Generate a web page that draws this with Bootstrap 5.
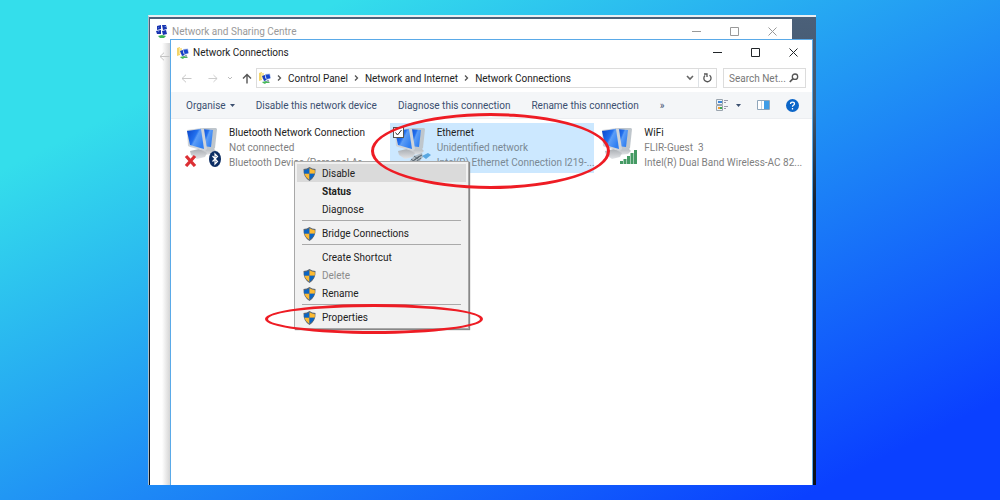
<!DOCTYPE html>
<html lang="en">
<head>
<meta charset="utf-8">
<meta name="viewport" content="width=device-width, initial-scale=1">
<title>Network Connections</title>
<link href="https://cdn.jsdelivr.net/npm/bootstrap@5.3.0/dist/css/bootstrap.min.css" rel="stylesheet">
<style>
  body {
    font: 10px/15px Roboto, "Open Sans", sans-serif;
    color: #222;
    min-height: 100vh;
    padding: 15px 184px 15px 148px;
    background: linear-gradient(to bottom right, #34deeb 17%, #0a40ff 90%) no-repeat fixed;
  }
  button, input { font: inherit; color: inherit; background: none; border: 0; padding: 0; }
  svg { display: block; flex: none; }
  .desktop {
    display: grid;
    min-height: calc(100vh - 30px);
    border-top: 2px solid #e9eef2;
    border-left: 1px solid #a9bccb;
    background: linear-gradient(#4b6079, #41566d 20%, #16202f 40%, #0b111c);
  }
  .desktop > section { grid-area: 1 / 1; background: #fff; }
  .win-back { margin: 2px 24px 0 1px; color: #999; }
  .desktop > .win-back { background: linear-gradient(90deg, #fff 12px, #d5d5d5 20px); }
  .win-back header { height: 24px; background: #fff; padding-left: 6px; }
  .back-side { width: 20px; padding: 9px 0 0 9px; }
  .win-front { margin: 22px 3px 0 21px; border: 1px solid #5aaae8; border-bottom: 0; }
  .title-row { height: 25px; padding: 0 14px 0 6px; }
  .captions { gap: 29px; }
  .win-back .captions { padding-right: 15px; }
  .address-row { height: 20px; margin: 3px 6px 0 10px; }
  .box { border: 1px solid #dcdcdc; height: 20px; }
  .crumb { gap: 6px; padding-left: 2px; }
  .crumb a { color: #222; text-decoration: none; }
  .search { width: 83px; margin-left: 6px; padding: 0 6px 0 5px; }
  .search input { width: 60px; outline: 0; }
  .search input::placeholder { color: #777; opacity: 1; }
  .commands { height: 27px; margin-top: 4px; padding: 0 13px 0 15px; background: #f4f6f8; border-bottom: 1px solid #eceef1; color: #3b5070; }
  .command-list { gap: 21px; }
  .tiles { display: grid; grid-template-columns: repeat(3, minmax(0, 1fr)); gap: 3px; padding: 4px 10px 0 11px; }
  .tile { height: 50px; padding: 2px 0 0 2px; gap: 5px; color: #7f7f7f; }
  .tile.selected { background: #cce8ff; color: #7a8894; }
  .tile strong { font-weight: 400; color: #222; }
  .tile-check { position: absolute; left: 3px; top: 4px; width: 11px; height: 11px; margin: 0; appearance: none; background: #fff; border: 1px solid #555; }
  .tile-tick { position: absolute; left: 3px; top: 4px; pointer-events: none; }
  .context {
    left: 123px; top: 121px; width: 175px; min-width: 0; padding: 2px; margin: 0;
    font-size: inherit; background: #f1f1f1; border: 1px solid #a8a8a8; border-radius: 0;
    box-shadow: 1px 1px 1px #888;
  }
  .context button { display: flex; align-items: center; width: 100%; height: 18px; padding: 1px 0 0 6px; gap: 6px; color: #222; line-height: 17px; }
  .context button.plain { padding-left: 25px; }
  .context button.lit { background: #dadada; }
  .context button:disabled { color: #8c8c8c; }
  .context hr { height: 1px; margin: 2px 5px 3px 5px; border: 0; background: #aaa; opacity: 1; }
  .ring { border: 3px solid #ee1c24; border-radius: 50%; pointer-events: none; z-index: 1100; }
  .ring-ethernet { left: 200px; top: 73px; width: 239px; height: 76px; }
  .ring-properties { left: 94px; top: 264px; width: 218px; height: 30px; }
</style>
</head>
<body>

<svg width="0" height="0" class="position-absolute" aria-hidden="true">
  <defs>
    <linearGradient id="screen" x1="0" y1="0" x2="1" y2=".6">
      <stop offset="0" stop-color="#0a44c8"/><stop offset=".5" stop-color="#2270ee"/><stop offset=".6" stop-color="#5c9df6"/><stop offset="1" stop-color="#2f7ff2"/>
    </linearGradient>
    <linearGradient id="base" x1="0" y1="0" x2="0" y2="1">
      <stop offset="0" stop-color="#a9adb2"/><stop offset="1" stop-color="#e3e5e8"/>
    </linearGradient>
    <symbol id="pcs" viewBox="0 0 40 42">
      <path d="M18 23l10-1 4 4-3 3-9 1-4-4z" fill="url(#base)"/>
      <path d="M6 26l9-2 8 4-2 4-8 2-6-4z" fill="url(#base)"/>
      <path d="M16 3l16 0 1 1-2 19-3 3-10-2z" fill="#bfc6cc"/>
      <path d="M17 4l12 1-2 17-9-1z" fill="url(#screen)"/>
      <path d="M3 5l15-2 2 1 3 20-2 2-15-4-2-1z" fill="#cfd4d9"/>
      <path d="M3 6l14-2 3 20-14-4z" fill="url(#screen)"/>
    </symbol>
    <symbol id="shield" viewBox="0 0 13 14">
      <path d="M6.500 0Q9 2 12.500 2Q13 10 6.500 14Q0 10 .5 2Q4 2 6.500 0z" fill="#5d6670"/>
      <path d="M6.500 1.200V6.800H1.300Q.9 5 1.300 3Q4 3 6.500 1.200z" fill="#0b65c4"/>
      <path d="M6.500 1.200V6.800H11.700Q12.100 5 11.700 3Q9 3 6.500 1.200z" fill="#fcba32"/>
      <path d="M6.500 6.800V13Q2.500 10.500 1.300 6.800z" fill="#fcba32"/>
      <path d="M6.500 6.800V13Q10.500 10.500 11.700 6.800z" fill="#0b65c4"/>
    </symbol>
    <symbol id="netfolder" viewBox="0 0 12 12">
      <path d="M0 1l3-1v8l-3 1z" fill="#f3d469"/><path d="M2 1h3v6H2z" fill="#fae79c"/>
      <path d="M3 4l3-1 2 5-3 1z" fill="#173fc4"/><path d="M6 2l5-.5L12 6l-4 2-2-2z" fill="#bfcce8"/><path d="M6.500 2.800l4-.5.8 4-3.600.8z" fill="#1747cf"/>
      <path d="M3 10l4-1 4 1-1 1H7l-1 1-2-1z" fill="#49b85c"/><path d="M8 8h2v2H8z" fill="#9dabb3"/>
    </symbol>
    <symbol id="chev" viewBox="0 0 5 8"><path d="M1 1.500l2.500 2.500L1 6.500" fill="none" stroke="#555" stroke-width="1.300"/></symbol>
    <symbol id="arrow" viewBox="0 0 11 9"><path d="M10.500 4.500H1M5 .7L1 4.500l4 3.800" fill="none" stroke="currentColor" stroke-width="1"/></symbol>
    <symbol id="min" viewBox="0 0 9 9"><path d="M0 4.500h9" stroke="currentColor"/></symbol>
    <symbol id="max" viewBox="0 0 9 9"><path d="M.5.5h8v8h-8z" fill="none" stroke="currentColor"/></symbol>
    <symbol id="close" viewBox="0 0 9 9"><path d="M.5.5l8 8m0-8l-8 8" stroke="currentColor"/></symbol>
  </defs>
</svg>

<main class="desktop">
  <section class="win-back" aria-label="Network and Sharing Centre">
    <header class="d-flex align-items-center">
      <svg class="me-1" width="12" height="13" viewBox="0 0 12 13"><path d="M1 1l4-1v4l-4 1zM6 0l4 0 1 4-4 1zM0 6l5-1v4H1zM6 6l4-1 1 4-4 1z" fill="#1a35b0"/><path d="M2 2h1v1M8 1h2v1M2 6h1v1" fill="#7fb0f4"/><path d="M2 11l4-1 4 1-2 2H4z" fill="#3db455"/></svg>
      <span class="flex-grow-1">Network and Sharing Centre</span>
      <span class="d-flex captions">
        <button aria-label="Minimise"><svg width="9" height="9"><use href="#min"/></svg></button>
        <button aria-label="Maximise"><svg width="9" height="9"><use href="#max"/></svg></button>
        <button aria-label="Close"><svg width="9" height="9"><use href="#close"/></svg></button>
      </span>
    </header>
    <div class="back-side"><svg width="11" height="9" color="#c4c4c4"><use href="#arrow"/></svg></div>
  </section>

  <section class="win-front position-relative" aria-label="Network Connections">
    <header class="title-row d-flex align-items-center">
      <svg class="me-1" width="12" height="12"><use href="#netfolder"/></svg>
      <span class="flex-grow-1">Network Connections</span>
      <span class="d-flex captions text-dark">
        <button aria-label="Minimise"><svg width="9" height="9"><use href="#min"/></svg></button>
        <button aria-label="Maximise"><svg width="9" height="9"><use href="#max"/></svg></button>
        <button aria-label="Close"><svg width="9" height="9"><use href="#close"/></svg></button>
      </span>
    </header>

    <div class="address-row d-flex align-items-center">
      <button aria-label="Back"><svg width="11" height="9" color="#c8c8c8"><use href="#arrow"/></svg></button>
      <button class="ms-3" aria-label="Forward"><svg width="10" height="9" viewBox="0 0 11 9"><path d="M.5 4.500H10M6 .7l4 3.800-4 3.800" fill="none" stroke="#c8c8c8"/></svg></button>
      <button class="ms-2" aria-label="Recent"><svg width="8" height="5" viewBox="0 0 8 5"><path d="M2 1l2 2 2-2" fill="none" stroke="#bbb"/></svg></button>
      <button class="ms-2" aria-label="Up"><svg width="10" height="11" viewBox="0 0 10 11"><path d="M5 10.500V1.500M1 5.500l4-4 4 4" fill="none" stroke="#555" stroke-width="1.400"/></svg></button>
      <nav class="box ms-1 flex-grow-1 d-flex align-items-center" aria-label="Address">
        <span class="crumb d-flex align-items-center flex-grow-1">
          <svg width="12" height="12"><use href="#netfolder"/></svg>
          <svg width="5" height="8"><use href="#chev"/></svg>
          <a href="#">Control Panel</a>
          <svg width="5" height="8"><use href="#chev"/></svg>
          <a href="#">Network and Internet</a>
          <svg width="5" height="8"><use href="#chev"/></svg>
          <a href="#">Network Connections</a>
        </span>
        <button class="me-1" aria-label="Previous locations"><svg width="8" height="6" viewBox="0 0 8 6"><path d="M1 1l3 3 3-3" fill="none" stroke="#666" stroke-width="1.600"/></svg></button>
        <button class="h-100 px-1 border-start" aria-label="Refresh"><svg width="9" height="10" viewBox="0 0 9 10"><path d="M6.500 2.200a3.600 3.600 0 1 1-4.500.3M1 1h3v3" fill="none" stroke="#555" stroke-width="1.300"/></svg></button>
      </nav>
      <label class="box search d-flex align-items-center justify-content-between">
        <input type="text" placeholder="Search Net..." aria-label="Search Network Connections">
        <svg width="10" height="10" viewBox="0 0 10 10"><circle cx="6" cy="3.700" r="2.700" fill="none" stroke="#555" stroke-width="1.300"/><path d="M4 5.700L.8 9" stroke="#555" stroke-width="1.700"/></svg>
      </label>
    </div>

    <div class="commands d-flex align-items-center">
      <div class="command-list d-flex align-items-center">
        <button class="d-flex align-items-center gap-1">Organise <svg width="5" height="3" viewBox="0 0 5 3"><path d="M0 0h5L2.500 3z" fill="#3b5070"/></svg></button>
        <button>Disable this network device</button>
        <button>Diagnose this connection</button>
        <button>Rename this connection</button>
        <button aria-label="More commands">»</button>
      </div>
      <span class="ms-auto d-flex align-items-center">
        <button class="d-flex align-items-center gap-2" aria-label="Change view">
          <svg width="12" height="12" viewBox="0 0 12 12"><path d="M.5.500h6v5h-6zM.5 6.500h6v5h-6z" fill="#eef2f6" stroke="#9aa4ae"/><path d="M2 2h4v2H2z" fill="#3e86d8"/><path d="M2 8h2v2H2z" fill="#f0a030"/><path d="M4 8h2v2H4z" fill="#3da64a"/><path d="M8 1.500h4M8 3.500h2M8 7.500h4M8 9.500h2" stroke="#99a"/></svg>
          <svg width="5" height="3" viewBox="0 0 5 3"><path d="M0 0h5L2.500 3z" fill="#3b5070"/></svg>
        </button>
        <button class="ms-3" aria-label="Preview pane"><svg width="13" height="10" viewBox="0 0 13 10"><path d="M.5.500h12v9H.5z" fill="#fff" stroke="#8fa6bb"/><path d="M7 1h5v8H7z" fill="#3f9ce6"/><path d="M4.500 1v8" stroke="#c5d2de"/></svg></button>
        <button class="ms-3" aria-label="Help"><svg width="13" height="13" viewBox="0 0 12 12"><circle cx="6" cy="6" r="6" fill="#0c66c8"/><path d="M4.200 4.500Q4.200 2.800 6 2.800T7.800 4.400Q7.800 5.300 6.800 5.800Q6 6.200 6 7.200M6 8.300v1.300" fill="none" stroke="#fff" stroke-width="1.200"/></svg></button>
      </span>
    </div>

    <div class="tiles">
      <article class="tile d-flex">
        <svg width="40" height="42" viewBox="0 0 40 42"><use href="#pcs" width="40" height="42"/><path d="M2 31l9 10m0-10l-9 10" stroke="#dc2f34" stroke-width="3.200"/><ellipse cx="31" cy="34" rx="6" ry="8" fill="#0c2d63"/><path d="M28.500 31l5 5.500-2.500 2.500V29l2.500 2.500-5 5" fill="none" stroke="#fff" stroke-width="1.200"/></svg>
        <div class="text-nowrap"><strong>Bluetooth Network Connection</strong><br>Not connected<br>Bluetooth Device (Personal Ar...</div>
      </article>
      <article class="tile selected d-flex position-relative">
        <svg width="40" height="42" viewBox="0 0 40 42"><use href="#pcs" width="40" height="42"/><path d="M16 38l6-7 8-3 1 4-4 5-8 4z" fill="#aeb8c0"/><path d="M17 39l9-7 4-2m-9 9l8-6m-10 1l4 3m-1-6l4 3" stroke="#5f6d78" stroke-width="1"/><path d="M30 31l6-3 3 2-5 4z" fill="#5aa7e0"/></svg>
        <input class="tile-check" type="checkbox" checked aria-label="Select Ethernet">
        <svg class="tile-tick" width="11" height="11" viewBox="0 0 11 11"><path d="M2.500 5.500l2 2.500 4-5" fill="none" stroke="#333"/></svg>
        <div class="text-nowrap"><strong>Ethernet</strong><br>Unidentified network<br>Intel(R) Ethernet Connection I219-...</div>
      </article>
      <article class="tile d-flex">
        <svg width="40" height="42" viewBox="0 0 40 42"><use href="#pcs" width="40" height="42"/><path d="M21 36h3v3h-3zM24.500 34h3v5h-3zM28 31h3v8h-3zM31.500 28h3v11h-3zM35 25h3v14h-3z" fill="#459a64"/></svg>
        <div class="text-nowrap"><strong>WiFi</strong><br>FLIR-Guest &nbsp;3<br>Intel(R) Dual Band Wireless-AC 82...</div>
      </article>
    </div>

    <div class="context dropdown-menu show position-absolute" role="menu">
      <button class="lit" role="menuitem"><svg width="13" height="14"><use href="#shield"/></svg>Disable</button>
      <button class="plain fw-bold" role="menuitem">Status</button>
      <button class="plain" role="menuitem">Diagnose</button>
      <hr>
      <button role="menuitem"><svg width="13" height="14"><use href="#shield"/></svg>Bridge Connections</button>
      <hr>
      <button class="plain" role="menuitem">Create Shortcut</button>
      <button role="menuitem" disabled><svg width="13" height="14"><use href="#shield"/></svg>Delete</button>
      <button role="menuitem"><svg width="13" height="14"><use href="#shield"/></svg>Rename</button>
      <hr>
      <button role="menuitem"><svg width="13" height="14"><use href="#shield"/></svg>Properties</button>
    </div>
    <div class="ring ring-ethernet position-absolute"></div>
    <div class="ring ring-properties position-absolute"></div>
  </section>
</main>
<script src="https://cdn.jsdelivr.net/npm/bootstrap@5.3.0/dist/js/bootstrap.bundle.min.js"></script>
</body>
</html>
